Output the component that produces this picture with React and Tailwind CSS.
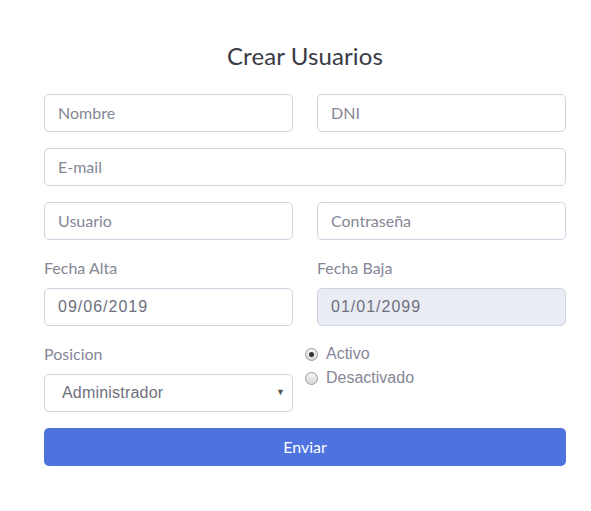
export default function App() {
    return (
        <div className="min-h-screen bg-white">
            <div className="ml-[44px] w-[522px] pt-[41px]">
                <h1 className="text-center text-[24px] leading-[29px] text-[#3a3b45] mb-[24px] font-['Lato',sans-serif] tracking-[0.1px]">
                    Crear Usuarios
                </h1>

                <div className="flex flex-col gap-4">
                    <div className="grid grid-cols-2 gap-6">
                        <Input placeholder="Nombre" />
                        <Input placeholder="DNI" />
                    </div>
                    <Input placeholder="E-mail" />
                    <div className="grid grid-cols-2 gap-6">
                        <Input placeholder="Usuario" />
                        <Input placeholder="Contraseña" />
                    </div>
                    <div className="grid grid-cols-2 gap-6">
                        <div>
                            <Label>Fecha Alta</Label>
                            <Input value="09/06/2019" />
                        </div>
                        <div>
                            <Label>Fecha Baja</Label>
                            <Input value="01/01/2099" disabled />
                        </div>
                    </div>
                    <div className="flex gap-3">
                        <div className="w-[249px] shrink-0">
                            <Label>Posicion</Label>
                            <div className="relative h-[38px] rounded-[5px] border border-[#d1d3e2] bg-white flex items-center pl-[17px] pb-[1px] text-[16px] text-[#6e707e] font-['Liberation_Sans',sans-serif] tracking-[0.2px]">
                                Administrador
                                <span className="absolute right-[7px] top-[11px] text-[9px] text-[#555]">▼</span>
                            </div>
                        </div>
                        <div className="flex flex-col text-[16px] leading-[24px] text-[#858796] font-['Liberation_Sans',sans-serif]">
                            <Radio checked>Activo</Radio>
                            <Radio>Desactivado</Radio>
                        </div>
                    </div>
                    <button className="h-[38px] w-full rounded-[5px] bg-[#4e73df] text-white text-[16px] font-['Lato',sans-serif]">
                        Enviar
                    </button>
                </div>
            </div>
        </div>
    );
}

function Label({ children }) {
    return <div className="text-[16px] leading-[24px] text-[#858796] mb-2 font-['Lato',sans-serif]">{children}</div>;
}

function Input({ placeholder, value, disabled }) {
    return (
        <div
            className={`h-[38px] rounded-[5px] border border-[#d1d3e2] flex items-center px-[13px] pb-[1px] text-[16px] ${
                disabled ? "bg-[#eaecf4]" : "bg-white"
            }`}
        >
            {value ? (
                <span className="text-[#6e707e] font-['Liberation_Sans',sans-serif] tracking-[1px]">{value}</span>
            ) : (
                <span className="text-[#858796] font-['Lato',sans-serif]">{placeholder}</span>
            )}
        </div>
    );
}

function Radio({ checked, children }) {
    return (
        <div className="flex items-center gap-[8px]">
            <span className="w-[13px] h-[13px] rounded-full border border-[#9a9a9a] bg-gradient-to-b from-[#f4f4f4] to-[#d8d8d8] flex items-center justify-center">
                {checked && <span className="w-[5px] h-[5px] rounded-full bg-[#333]" />}
            </span>
            {children}
        </div>
    );
}
